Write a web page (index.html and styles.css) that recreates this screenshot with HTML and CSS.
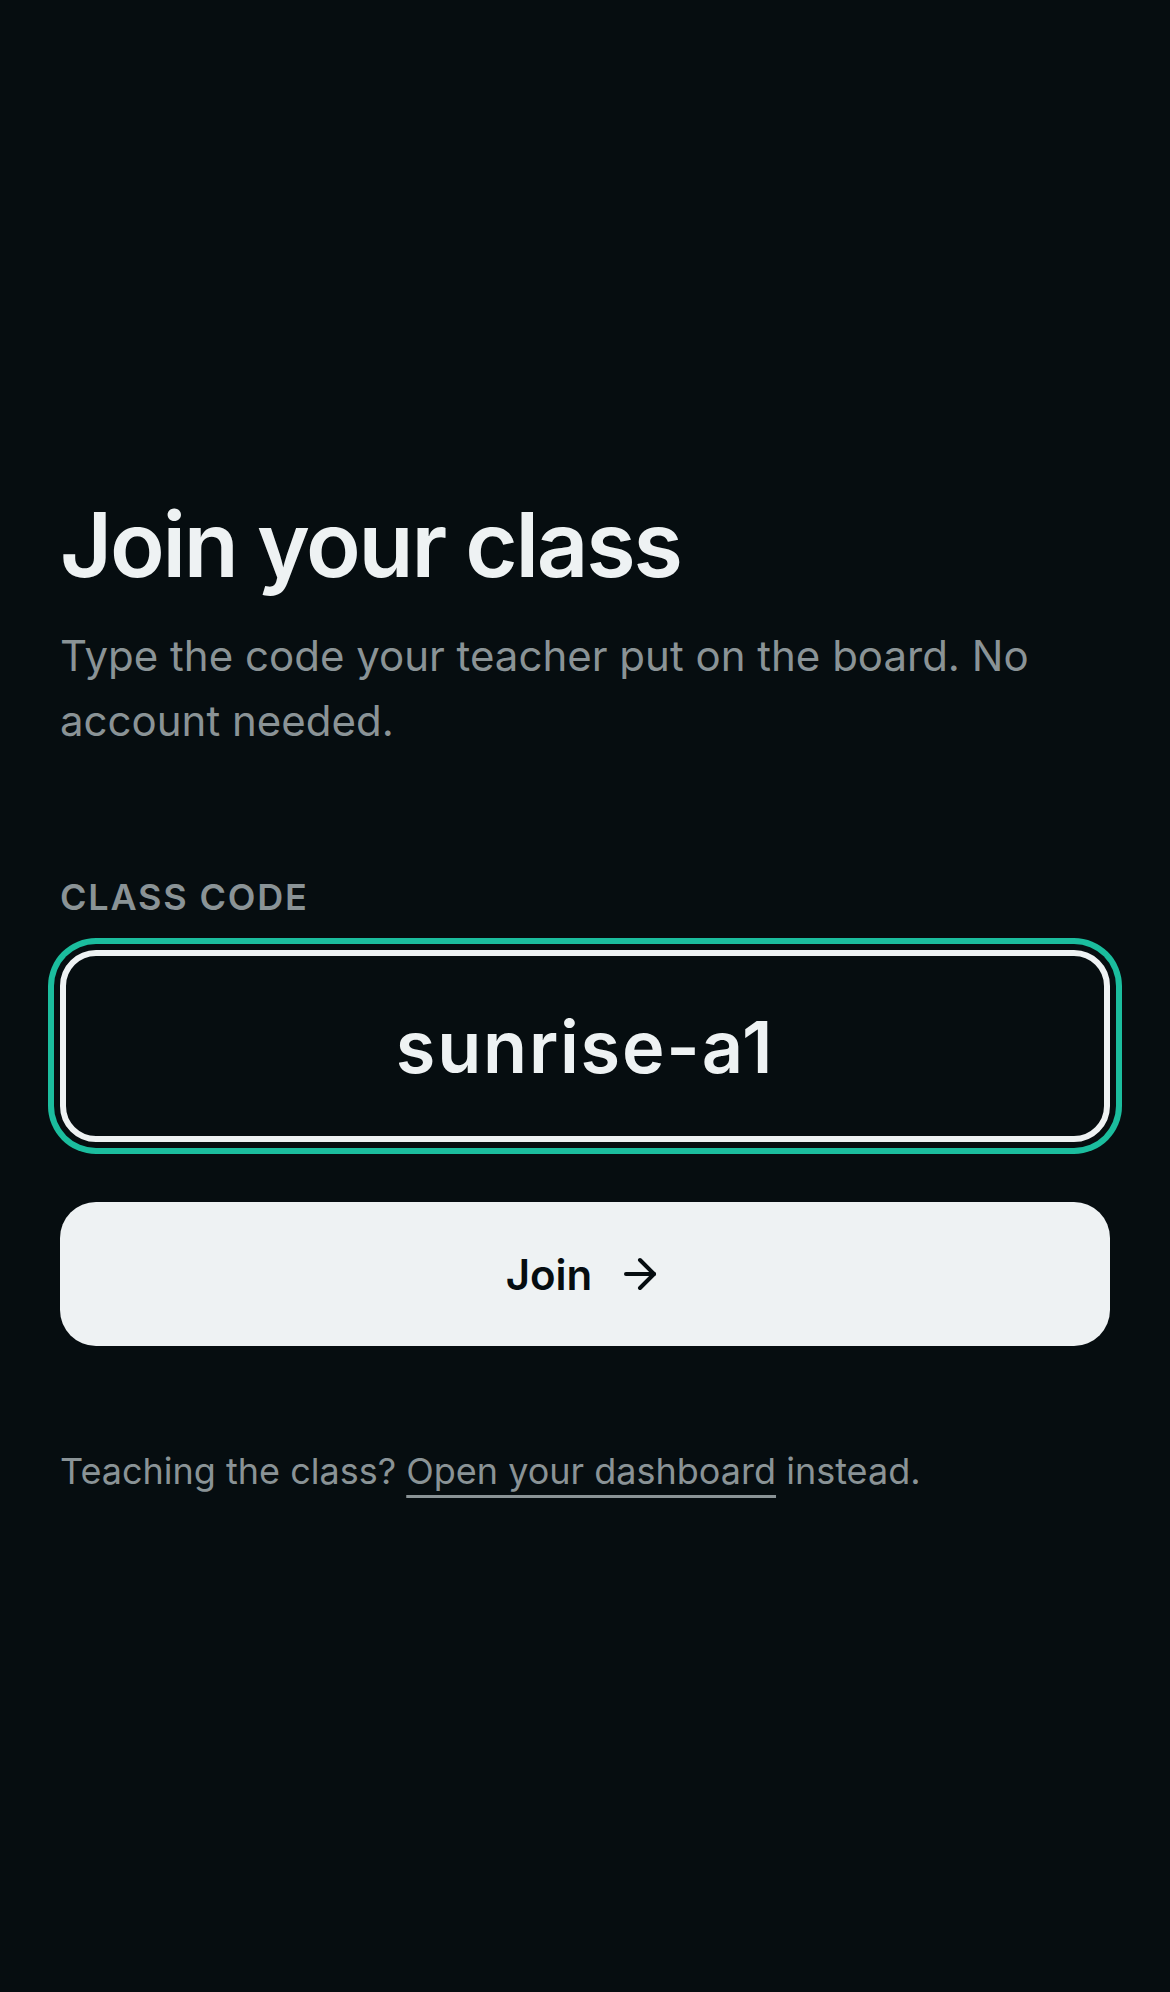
FILE: index.html
```html
<!DOCTYPE html>
<html lang="en">
<head>
<meta charset="utf-8">
<title>Join your class</title>
<link rel="stylesheet" href="styles.css">
</head>
<body>
<main class="page">
  <h1 class="title">Join your class</h1>
  <p class="subtitle">Type the code your teacher put on the board. No account needed.</p>
  <label class="field-label" for="code">CLASS CODE</label>
  <input id="code" class="code-input" type="text" value="sunrise-a1">
  <button class="join-btn" type="button">
    <span>Join</span>
    <svg class="arrow" viewBox="0 0 24 24" fill="none" stroke="currentColor" stroke-width="2" stroke-linecap="round" stroke-linejoin="round" aria-hidden="true"><path d="M5 12h14"/><path d="M12 5l7 7-7 7"/></svg>
  </button>
  <p class="footer">Teaching the class? <a class="footer-link" href="#">Open your dashboard</a> instead.</p>
</main>
</body>
</html>
```
FILE: styles.css
```css
html, body {
  margin: 0;
  padding: 0;
  background: #060d10;
}

body {
  font-family: Inter, "Noto Sans", "Liberation Sans", sans-serif;
  color: #eef2f3;
}

.page {
  box-sizing: border-box;
  min-height: 100vh;
  display: flex;
  flex-direction: column;
  justify-content: center;
  padding: 0 60px;
}

.title {
  margin: 0;
  font-size: 90px;
  line-height: 101px;
  font-weight: 600;
  letter-spacing: -0.025em;
  color: #eef2f3;
}

.subtitle {
  margin: 28px 0 0;
  font-size: 42px;
  line-height: 65px;
  font-weight: 400;
  color: #8a9396;
}

.field-label {
  display: block;
  margin-top: 123px;
  font-size: 36px;
  line-height: 43px;
  font-weight: 600;
  letter-spacing: 0.05em;
  color: #8a9396;
}

.code-input {
  display: block;
  box-sizing: border-box;
  width: 100%;
  height: 192px;
  margin: 31px 0 0;
  padding: 0 30px;
  border: 6px solid #eef2f3;
  border-radius: 36px;
  background: #060d10;
  box-shadow: 0 0 0 6px #060d10, 0 0 0 12px #1bbd9e;
  outline: none;
  color: #eef2f3;
  font-family: Inter, "Noto Sans", "Liberation Sans", sans-serif;
  font-size: 72px;
  font-weight: 600;
  letter-spacing: 0.025em;
  text-align: center;
}

.join-btn {
  display: flex;
  align-items: center;
  justify-content: center;
  gap: 24px;
  box-sizing: border-box;
  width: 100%;
  height: 144px;
  margin-top: 60px;
  padding: 0;
  border: none;
  border-radius: 36px;
  background: #eef2f3;
  color: #060d10;
  font-family: Inter, "Noto Sans", "Liberation Sans", sans-serif;
  font-size: 42px;
  font-weight: 600;
  cursor: pointer;
}

.arrow {
  width: 48px;
  height: 48px;
  flex: none;
}

.footer {
  margin: 98px 0 0;
  font-size: 36px;
  line-height: 54px;
  color: #8a9396;
}

.footer-link {
  color: #8a9396;
  text-decoration: underline;
  text-decoration-thickness: 3px;
  text-underline-offset: 11px;
}
```
